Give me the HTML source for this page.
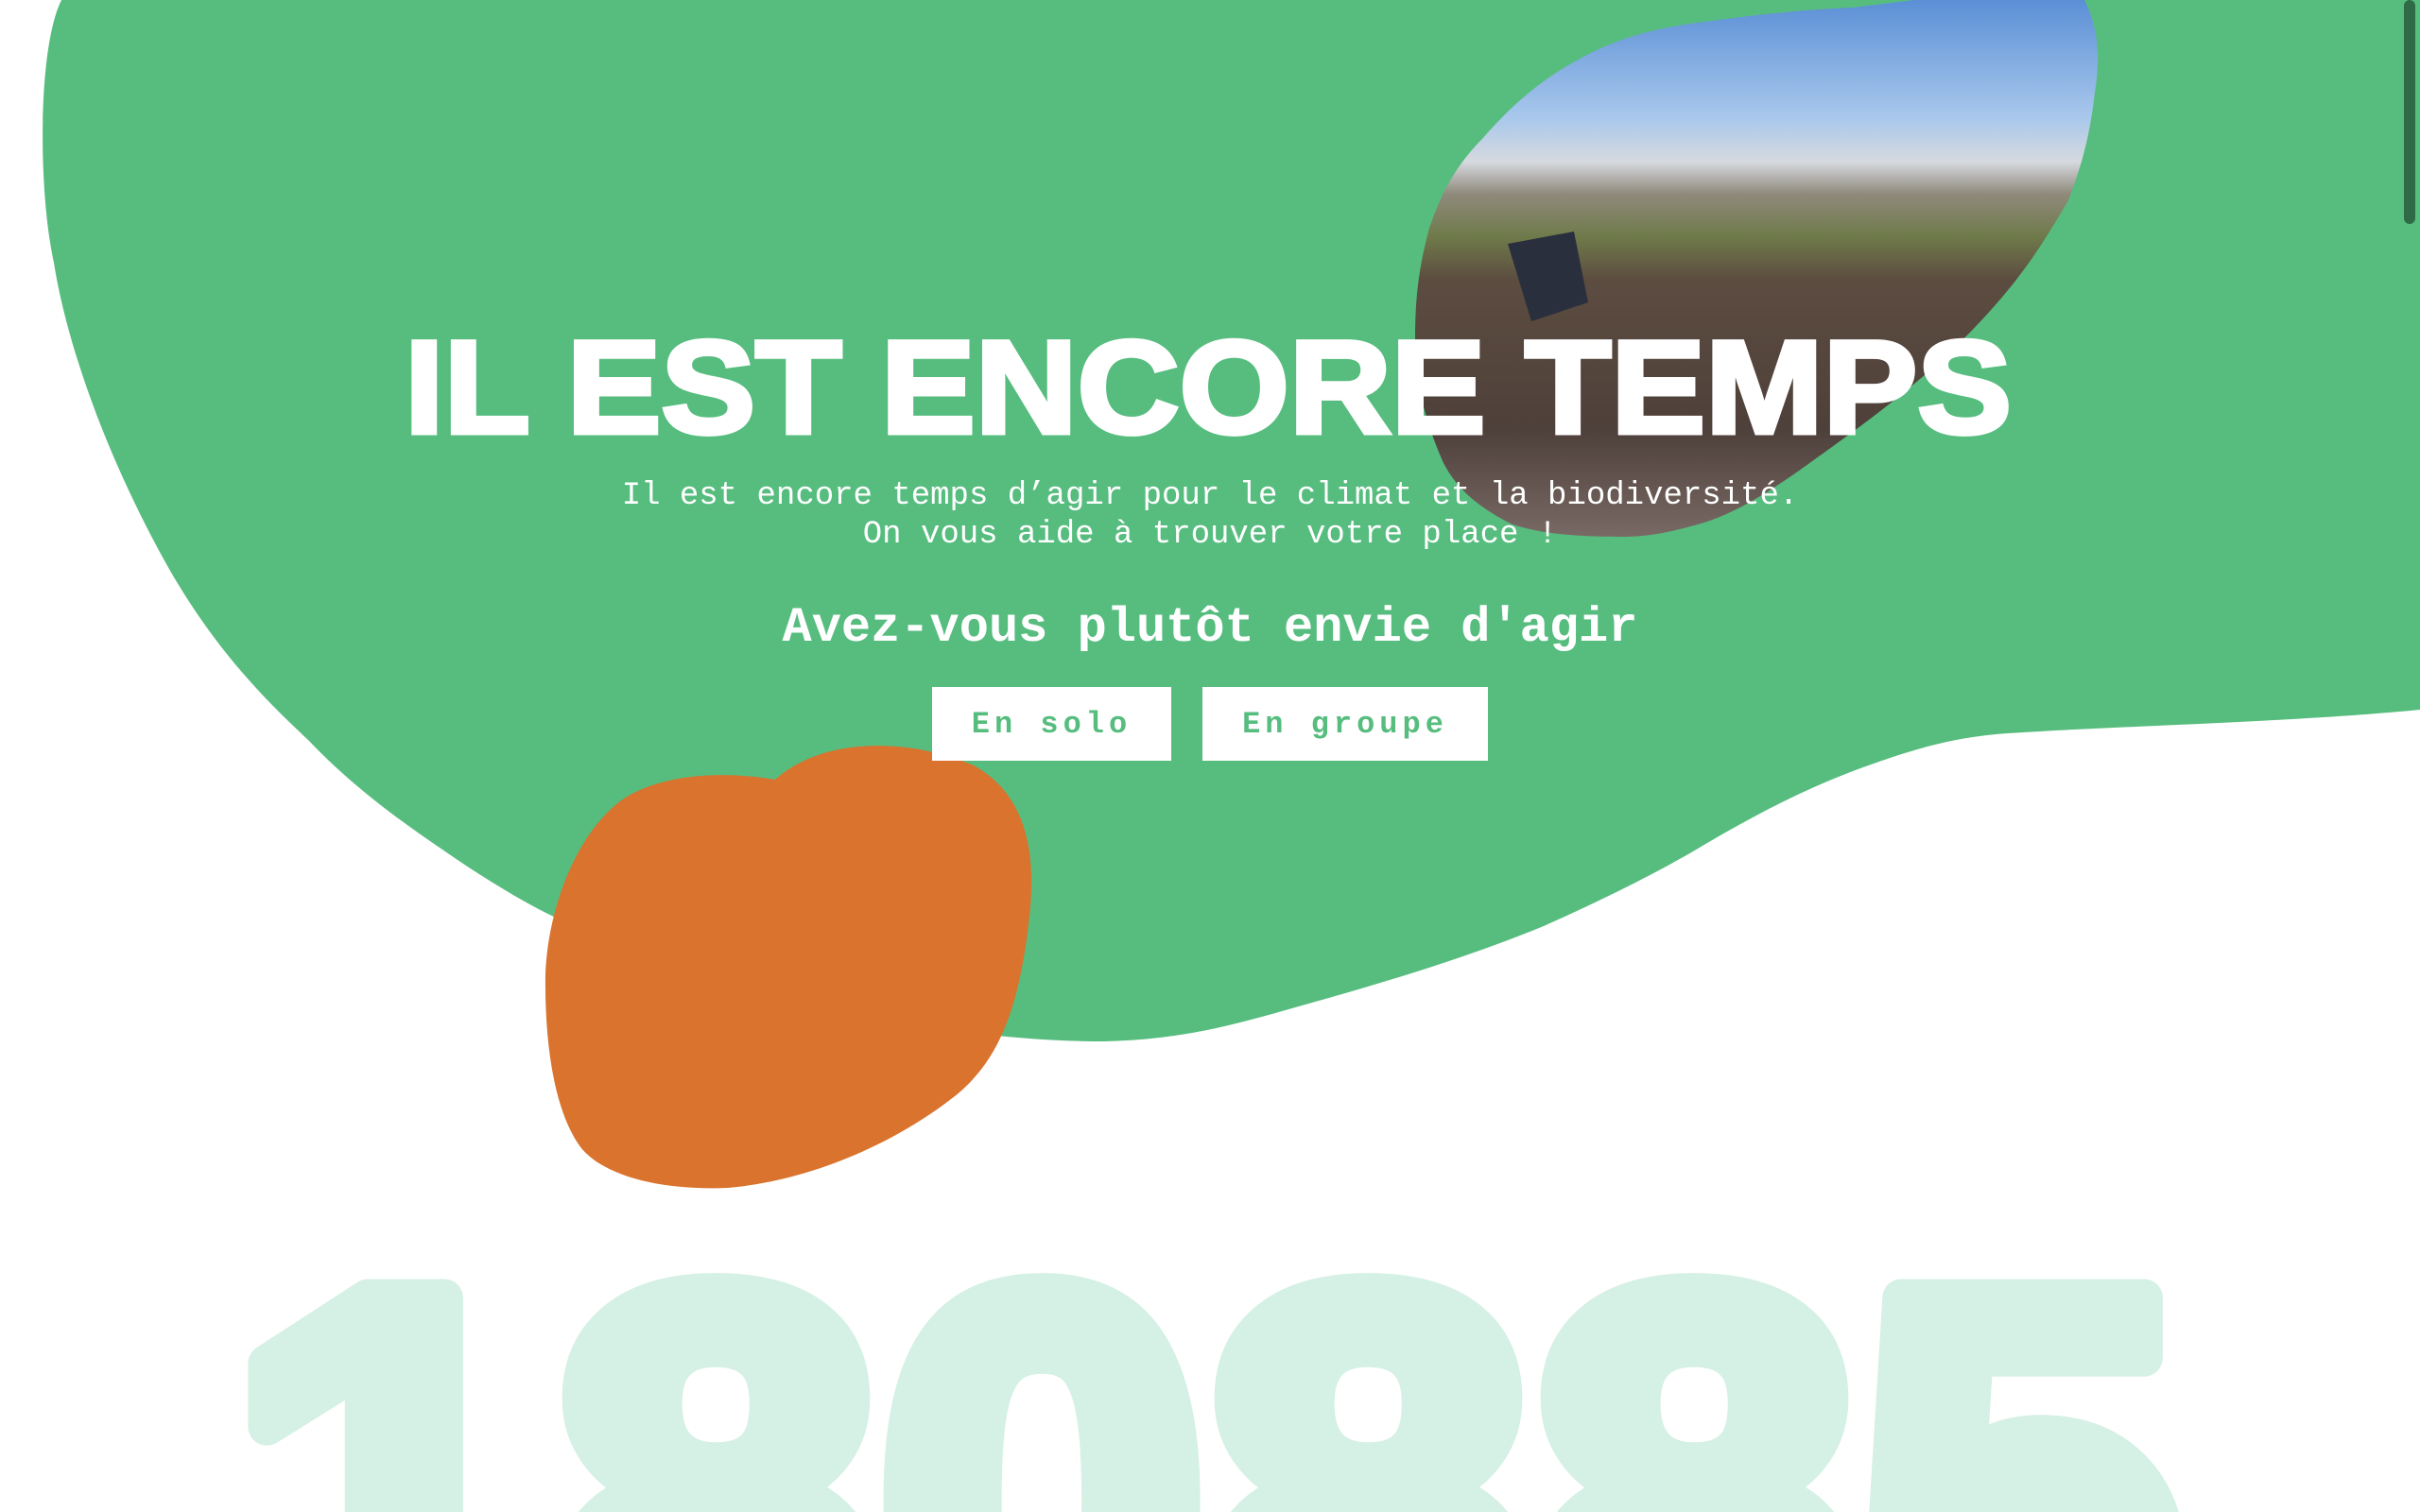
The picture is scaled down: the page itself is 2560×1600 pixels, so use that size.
<!DOCTYPE html>
<html><head><meta charset="utf-8"><style>
html,body{margin:0;padding:0;width:2560px;height:1600px;overflow:hidden;background:#fff}
#w{position:relative;width:2560px;height:1600px;overflow:hidden}
svg{position:absolute;left:0;top:0}
.t{position:absolute;left:0;width:2560px;text-align:center;color:#fff;font-family:"Liberation Mono",monospace;white-space:pre}
.btn{position:absolute;top:727px;height:78px;background:#fff;color:#57bd7f;font-family:"Liberation Mono",monospace;font-weight:bold;font-size:32px;letter-spacing:5px;display:flex;align-items:center;justify-content:center}
</style></head><body><div id="w">
<svg width="2560" height="1600" viewBox="0 0 2560 1600">
<defs>
<linearGradient id="ph" x1="0" y1="0" x2="0" y2="570" gradientUnits="userSpaceOnUse">
<stop offset="0" stop-color="#5b8fd6"/>
<stop offset="0.22" stop-color="#a9c8ec"/>
<stop offset="0.3" stop-color="#d6d9df"/>
<stop offset="0.36" stop-color="#8f8a7c"/>
<stop offset="0.44" stop-color="#6f7a4a"/>
<stop offset="0.52" stop-color="#5c4c40"/>
<stop offset="0.8" stop-color="#4e403a"/>
<stop offset="1" stop-color="#7a6a66"/>
</linearGradient>
</defs>
<path fill="#57bd7f" d="M65,0 C40,50 40,200 57,278 C70,360 110,480 180,604 C230,690 280,740 327,784 C380,840 440,880 490,914 C560,960 600,980 653,996 C740,1030 790,1050 849,1061 C960,1085 1060,1102 1168,1102 C1260,1100 1320,1080 1388,1061 C1480,1035 1560,1010 1633,980 C1700,950 1750,925 1796,898 C1860,860 1910,835 1960,816 C2030,790 2070,780 2123,776 C2220,770 2290,768 2368,764 C2450,760 2510,756 2560,751 L2560,0 Z"/>
<path fill="url(#ph)" d="M2025,0 L2205,0 C2220,30 2222,60 2216,98 C2210,150 2200,180 2188,212 C2160,260 2140,290 2107,327 C2060,380 2010,420 1960,457 C1900,500 1850,540 1796,555 C1760,565 1740,568 1715,568 C1670,568 1630,565 1600,555 C1560,535 1540,515 1527,490 C1505,440 1497,400 1497,359 C1497,310 1502,280 1511,245 C1525,200 1545,170 1568,147 C1600,110 1630,85 1666,65 C1710,40 1750,30 1796,24 C1860,15 1910,10 1960,8 Z"/>
<path fill="#2a2f3e" d="M1595,258 L1665,245 L1680,320 L1620,340 Z"/>
<path fill="#d9732d" d="M820,825 C870,780 960,780 1030,810 C1085,840 1095,900 1090,960 C1080,1060 1060,1120 1010,1160 C940,1215 850,1250 770,1257 C700,1260 640,1245 615,1215 C585,1175 576,1100 577,1030 C580,960 610,880 660,845 C700,820 760,815 820,825 Z"/>
<text x="428" y="458" textLength="1700" lengthAdjust="spacingAndGlyphs" fill="#fff" stroke="#fff" stroke-width="5" font-family="Liberation Sans, sans-serif" font-weight="900" font-size="140">IL EST ENCORE TEMPS</text>
<text x="240" y="1800" textLength="2070" lengthAdjust="spacingAndGlyphs" fill="#d5f0e4" stroke="#d5f0e4" stroke-width="40" stroke-linejoin="round" font-family="Liberation Sans, sans-serif" font-weight="900" font-size="620">180885</text>
<rect x="2543" y="0" width="12" height="237" rx="6" fill="#2f6a46"/>
</svg>
<div class="t" style="top:505px;font-size:34px;line-height:41px">Il est encore temps d’agir pour le climat et la biodiversité.
On vous aide à trouver votre place !</div>
<div class="t" style="top:630px;font-size:52px;font-weight:bold;line-height:70px">Avez-vous plutôt envie d'agir</div>
<div class="btn" style="left:986px;width:253px">En solo</div>
<div class="btn" style="left:1272px;width:302px">En groupe</div>
</div></body></html>
